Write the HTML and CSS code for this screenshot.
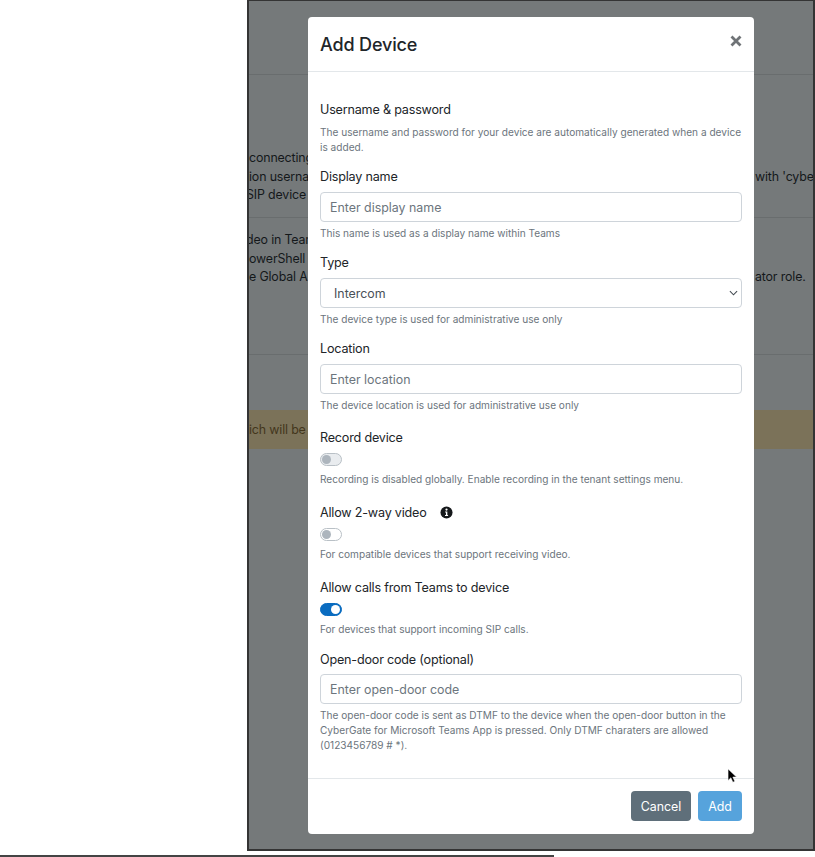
FILE: index.html
```html
<!DOCTYPE html>
<html lang="en">
<head>
<meta charset="utf-8">
<title>Add Device</title>
<link rel="stylesheet" href="styles.css">
</head>
<body>
<div class="frame">
  <div class="backdrop">
    <div class="sec sec-head"></div>
    <div class="sec sec-one">
      <div class="row"><span class="left">connecting</span></div>
      <div class="row"><span class="left">ion userna</span><span class="right">with 'cyber</span></div>
      <div class="row"><span class="left cut">SIP device</span></div>
    </div>
    <div class="sec sec-two">
      <div class="row"><span class="left cut">deo in Teams</span></div>
      <div class="row"><span class="left">owerShell</span></div>
      <div class="row"><span class="left">e Global A</span><span class="right">ator role.</span></div>
    </div>
    <div class="alert"><span class="left">ich will be</span></div>
  </div>

  <div class="modal">
    <header class="modal-head">
      <h1>Add Device</h1>
      <svg class="close" viewBox="0 0 12 12" width="12" height="12"><path d="M1.500 1.500l9 9M10.500 1.500l-9 9" stroke="#6f7376" stroke-width="2.800" fill="none"/></svg>
    </header>
    <div class="modal-body">
      <div class="field intro">
        <div class="label">Username &amp; password</div>
        <p class="help">The username and password for your device are automatically generated when a device is added.</p>
      </div>
      <div class="field">
        <div class="label">Display name</div>
        <input class="control" type="text" placeholder="Enter display name">
        <p class="help">This name is used as a display name within Teams</p>
      </div>
      <div class="field">
        <div class="label">Type</div>
        <div class="select-wrap">
          <select class="control select"><option>Intercom</option></select>
          <svg class="chevron" viewBox="0 0 10 6" width="9" height="6"><path d="M1 1l4 4 4-4" stroke="#444b52" stroke-width="1.200" fill="none"/></svg>
        </div>
        <p class="help">The device type is used for administrative use only</p>
      </div>
      <div class="field">
        <div class="label">Location</div>
        <input class="control" type="text" placeholder="Enter location">
        <p class="help">The device location is used for administrative use only</p>
      </div>
      <div class="field toggle-field first-toggle">
        <div class="label">Record device</div>
        <span class="toggle shaded"></span>
        <p class="help">Recording is disabled globally. Enable recording in the tenant settings menu.</p>
      </div>
      <div class="field toggle-field">
        <div class="label">Allow 2-way video
          <svg class="info" viewBox="0 0 14 14" width="13" height="13"><circle cx="7" cy="7" r="6.500" fill="#15181b"/><circle cx="7" cy="3.900" r="1.200" fill="#fff"/><path d="M5.500 6h2.400v3.600h.8v1.100H5.400V9.600h1V7.100h-.9z" fill="#fff"/></svg>
        </div>
        <span class="toggle"></span>
        <p class="help">For compatible devices that support receiving video.</p>
      </div>
      <div class="field toggle-field last-toggle">
        <div class="label">Allow calls from Teams to device</div>
        <span class="toggle on"></span>
        <p class="help">For devices that support incoming SIP calls.</p>
      </div>
      <div class="field door">
        <div class="label">Open-door code (optional)</div>
        <input class="control" type="text" placeholder="Enter open-door code">
        <p class="help">The open-door code is sent as DTMF to the device when the open-door button in the CyberGate for Microsoft Teams App is pressed. Only DTMF charaters are allowed (0123456789 # *).</p>
      </div>
    </div>
    <footer class="modal-foot">
      <button class="btn cancel" type="button">Cancel</button>
      <button class="btn add" type="button">Add</button>
    </footer>
    <svg class="cursor" viewBox="0 0 12 18" width="11" height="16"><path d="M1 1v13l3.200-3 2.200 5 2.200-1-2.200-4.800H10.500z" fill="#000" stroke="#fff" stroke-width=".6"/></svg>
  </div>
</div>
<div class="rule"></div>
</body>
</html>
```
FILE: styles.css
```css
* { box-sizing: border-box; }
html, body { margin: 0; padding: 0; }
body {
  background: #fff;
  font-family: Inter, "Liberation Sans", sans-serif;
  color: #212529;
  width: 815px;
  height: 857px;
  overflow: hidden;
}
.frame {
  position: relative;
  margin-left: 247px;
  width: 568px;
  height: 851px;
  border: 2px solid #343434;
  border-top-width: 1px;
  background: #75797a;
  overflow: hidden;
}
.rule {
  margin-top: 4px;
  width: 554px;
  height: 2px;
  background: #444;
}
.backdrop { font-size: 12.4px; letter-spacing: -0.15px; color: #14181a; }
.sec { border-bottom: 1px solid #696d6e; }
.sec-head { height: 74px; }
.sec-one { height: 143px; padding-top: 74px; }
.sec-two { height: 137px; padding-top: 13px; }
.row { display: flex; height: 18.7px; line-height: 18.7px; white-space: nowrap; }
.left { width: 59px; overflow: hidden; flex: none; }
.left.cut { text-indent: -3px; }
.right { margin-left: 447px; flex: none; }
.alert {
  margin-top: 55px;
  height: 39px;
  line-height: 39px;
  background: #7b7259;
  color: #43361c;
  white-space: nowrap;
}
.modal {
  position: absolute;
  left: 59px;
  top: 16px;
  width: 446px;
  height: 817px;
  background: #fff;
  border-radius: 4px;
  display: flex;
  flex-direction: column;
}
.modal-head {
  height: 55px;
  flex: none;
  border-bottom: 1px solid #e3e7ea;
  padding: 0 12px;
  display: flex;
  align-items: center;
  justify-content: space-between;
}
.modal-head h1 {
  margin: 0;
  font-size: 18px;
  font-weight: 500;
  letter-spacing: -0.15px;
  color: #212529;
}
.close { margin-top: -6px; margin-right: 0; }
.modal-body { flex: 1; padding: 29px 12px 0; }
.field { margin-bottom: 13px; }
.field.intro { margin-bottom: 13px; }
.label {
  font-size: 12.6px;
  font-weight: 400;
  letter-spacing: -0.2px;
  line-height: 17px;
  color: #212529;
  margin-bottom: 7px;
  display: flex;
  align-items: center;
}
.help {
  margin: 4px 0 0;
  font-size: 10.1px;
  line-height: 15px;
  color: #6c757d;
}
.intro .help { margin-top: 7px; }
.control {
  display: block;
  width: 100%;
  height: 30px;
  border: 1px solid #ced4da;
  border-radius: 4px;
  background: #fff;
  font-family: inherit;
  font-size: 12.4px;
  color: #495057;
  padding: 0 9px;
  outline: none;
}
.control::placeholder { color: #6c757d; opacity: 1; }
.select-wrap { position: relative; }
.select { appearance: none; -webkit-appearance: none; padding-left: 13px; }
.chevron { position: absolute; right: 4px; top: 12px; }
.toggle-field { margin-bottom: 17px; }
.first-toggle { margin-top: 16px; }
.last-toggle { margin-bottom: 14px; }
.toggle-field .help { margin-top: 6px; }
.toggle {
  display: block;
  position: relative;
  width: 22px;
  height: 13px;
  border: 1px solid #b9c0c6;
  border-radius: 7px;
  background: #fff;
}
.toggle::after {
  content: "";
  position: absolute;
  left: 1px;
  top: 1px;
  width: 9px;
  height: 9px;
  border-radius: 50%;
  background: #adb5bd;
}
.toggle.shaded { background: #e9ecef; }
.toggle.on { background: #0a6cc0; border-color: #0a6cc0; }
.toggle.on::after { left: 10px; background: #fff; }
.info { margin-left: 13px; }
.door { margin-bottom: 0; }
.door .label { margin-bottom: 6px; }
.modal-foot {
  flex: none;
  height: 56px;
  border-top: 1px solid #e3e7ea;
  padding: 12px 12px 0;
  display: flex;
  justify-content: flex-end;
  gap: 7px;
}
.btn {
  height: 30px;
  border: 0;
  border-radius: 4px;
  font-family: inherit;
  font-size: 12.4px;
  color: #fff;
}
.cancel { width: 60px; background: #5f6f7a; }
.add { width: 44px; background: #56a3dc; }
.cursor { position: absolute; left: 419px; top: 751px; }
```
